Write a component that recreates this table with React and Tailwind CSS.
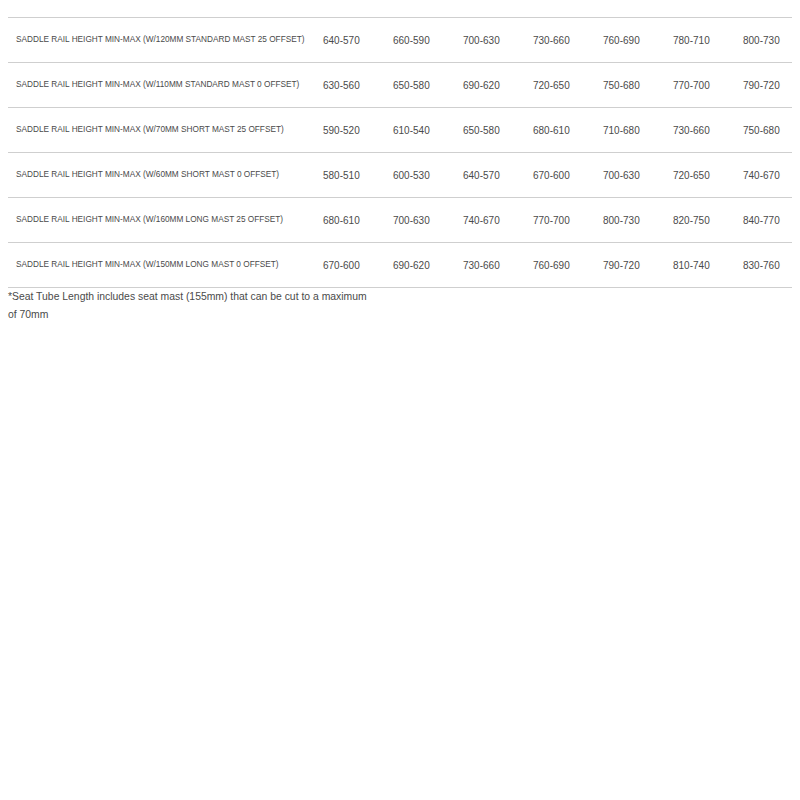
const rows = [
  ["SADDLE RAIL HEIGHT MIN-MAX (W/120MM STANDARD MAST 25 OFFSET)", ["640-570", "660-590", "700-630", "730-660", "760-690", "780-710", "800-730"]],
  ["SADDLE RAIL HEIGHT MIN-MAX (W/110MM STANDARD MAST 0 OFFSET)", ["630-560", "650-580", "690-620", "720-650", "750-680", "770-700", "790-720"]],
  ["SADDLE RAIL HEIGHT MIN-MAX (W/70MM SHORT MAST 25 OFFSET)", ["590-520", "610-540", "650-580", "680-610", "710-680", "730-660", "750-680"]],
  ["SADDLE RAIL HEIGHT MIN-MAX (W/60MM SHORT MAST 0 OFFSET)", ["580-510", "600-530", "640-570", "670-600", "700-630", "720-650", "740-670"]],
  ["SADDLE RAIL HEIGHT MIN-MAX (W/160MM LONG MAST 25 OFFSET)", ["680-610", "700-630", "740-670", "770-700", "800-730", "820-750", "840-770"]],
  ["SADDLE RAIL HEIGHT MIN-MAX (W/150MM LONG MAST 0 OFFSET)", ["670-600", "690-620", "730-660", "760-690", "790-720", "810-740", "830-760"]],
];

export default function App() {
  return (
    <main className="min-h-screen bg-white pt-[17px] px-2 text-[#4a4a4a]" style={{ fontFamily: '"Liberation Sans", Arial, sans-serif' }}>
      <div className="border-t border-[#cfcfcf] w-[784px]">
        {rows.map(([label, vals], i) => (
          <div key={i} className="grid grid-cols-[315px_repeat(6,70px)_1fr] items-center h-[45px] border-b border-[#cfcfcf]">
            <div className="pl-2 text-[8.25px] whitespace-nowrap">{label}</div>
            {vals.map((v, j) => (
              <div key={j} className="text-[10px]">{v}</div>
            ))}
          </div>
        ))}
      </div>
      <p className="w-[370px] text-[10.4px] leading-[18px] text-[#4a4a4a]">
        *Seat Tube Length includes seat mast (155mm) that can be cut to a maximum of 70mm
      </p>
    </main>
  );
}
